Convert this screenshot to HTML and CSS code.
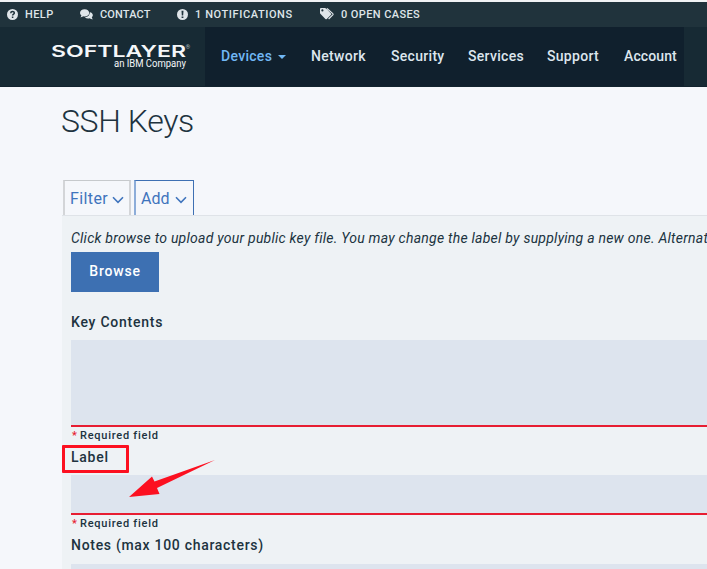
FILE: index.html
```html
<!DOCTYPE html>
<html lang="en">
<head>
<meta charset="utf-8">
<title>SSH Keys</title>
<link rel="stylesheet" href="styles.css">
</head>
<body>
<div class="utility">
  <a class="help"><svg width="11" height="11" viewBox="0 0 11 11"><circle cx="5.5" cy="5.5" r="5.5" fill="currentColor"/><path d="M3.7 4.2C3.8 2 7.4 2.1 7.3 4.1C7.2 5.1 5.7 5.2 5.6 6.5M5.6 7.6V9" fill="none" stroke="#20333c" stroke-width="1.5"/></svg><span>HELP</span></a>
  <a class="contact"><svg width="13" height="11" viewBox="0 0 13 11"><path d="M9.8 3.2C12.3 3.5 13.6 5.8 12.4 7.5L11.8 8.2Q12 9.5 13 10.3Q11 10.5 9.8 9.3Q6.7 10 4.9 8.2Q9.8 7.7 9.8 3.2Z" fill="currentColor"/><path d="M4.6.3C7.2.3 9.2 1.8 9.2 3.9S7.2 7.4 4.6 7.4Q3.9 7.4 3.2 7.2Q2 8.4.3 8.3Q1.3 7.4 1.4 6.4Q0 5.3 0 3.9C0 1.8 2 .3 4.6.3Z" fill="currentColor"/></svg><span>CONTACT</span></a>
  <a class="notifications"><svg width="11" height="11" viewBox="0 0 11 11"><circle cx="5.5" cy="5.5" r="5.5" fill="currentColor"/><path d="M4.5 1.8H6.5L6.2 6.4H4.8ZM4.6 7.4H6.4V9.1H4.6Z" fill="#20333c"/></svg><span>1 NOTIFICATIONS</span></a>
  <a class="cases"><svg width="15" height="12" viewBox="0 0 15 12"><path fill-rule="evenodd" d="M0 1Q0 0 1 0H4.8Q5.6 0 6.2.6L11 5.4Q11.7 6.1 11 6.8L6.8 11Q6.1 11.7 5.4 11L.6 6.1Q0 5.5 0 4.8ZM2.4 1.3A1.1 1.1 0 1 0 2.4 3.5A1.1 1.1 0 1 0 2.4 1.3Z" fill="currentColor"/><path d="M7 .5L12.8 5.6Q13.4 6.1 12.8 6.8L8.6 11" fill="none" stroke="currentColor" stroke-width="1.2"/></svg><span>0 OPEN CASES</span></a>
</div>
<header class="header">
  <svg class="logo" width="140" height="28" viewBox="0 0 140 28">
    <text class="brand" x="0" y="13.8" textLength="135" lengthAdjust="spacingAndGlyphs">SOFTLAYER</text>
    <text class="mark" x="134.5" y="6">®</text>
    <text class="tagline" x="63" y="24.3" textLength="72" lengthAdjust="spacingAndGlyphs">an IBM Company</text>
  </svg>
  <nav class="nav">
    <a class="devices">Devices</a><i class="caret"></i>
    <a class="network">Network</a>
    <a class="security">Security</a>
    <a class="services">Services</a>
    <a class="support">Support</a>
    <a class="account">Account</a>
  </nav>
</header>
<main>
  <h1>SSH Keys</h1>
  <div class="tabs">
    <a class="tab filter"><span>Filter</span><svg width="12" height="8" viewBox="0 0 12 8"><path d="M1 1.3L6 6.3L11 1.3"/></svg></a>
    <a class="tab add"><span>Add</span><svg width="12" height="8" viewBox="0 0 12 8"><path d="M1 1.3L6 6.3L11 1.3"/></svg></a>
  </div>
  <section class="panel">
    <p class="intro">Click browse to upload your public key file. You may change the label by supplying a new one. Alternat</p>
    <button class="browse">Browse</button>
    <label class="key-title">Key Contents</label>
    <div class="field key-field"></div>
    <div class="required"><b>*</b>Required field</div>
    <label class="label-title">Label</label>
    <div class="field label-field"></div>
    <div class="required"><b>*</b>Required field</div>
    <label class="notes-title">Notes (max 100 characters)</label>
    <div class="field notes-field"></div>
  </section>
</main>
<div class="highlight"></div>
<svg class="arrow" width="88" height="40" viewBox="0 0 88 40"><path d="M0 37L23 16.5L25.5 21.5L86 0L28 28L30.5 34Z" fill="#fc1020"/></svg>
</body>
</html>
```
FILE: styles.css
```css
* { box-sizing: border-box; }
body {
  margin: 0;
  height: 569px;
  overflow: hidden;
  position: relative;
  background: #f5f7fb;
  color: #20333f;
  font-family: Roboto, "Liberation Sans", sans-serif;
  border-top: 2px solid #f1f3f5;
}
.utility {
  height: 25px;
  display: flex;
  align-items: center;
  padding-left: 7px;
  background: #20333c;
  color: #dfe5e9;
  font-size: 11px;
  font-weight: 500;
  line-height: 24px;
  white-space: nowrap;
}
.utility svg { margin-bottom: 1px; }
.utility a { display: flex; align-items: center; gap: 7px; flex: none; }
.help { width: 73px; letter-spacing: .4px; }
.contact { width: 97px; letter-spacing: .15px; }
.notifications { width: 143px; letter-spacing: .6px; }
.utility .cases { letter-spacing: .4px; gap: 6px; }
.header { height: 60px; display: flex; background: #172a34; border-bottom: 1px solid #12232e; }
.logo { flex: none; margin: 16px 14px 0 51px; overflow: visible; fill: #f5f7f9; }
.brand { font: 600 16px Inter, sans-serif; }
.mark { font: 6px Roboto, sans-serif; fill: #a9b4ba; }
.tagline { font: 10px Roboto, sans-serif; }
.nav {
  width: 479px;
  display: flex;
  align-items: center;
  padding: 0 0 1px 16px;
  background: #10202d;
  color: #dde6ee;
  font-size: 14px;
  font-weight: 500;
  letter-spacing: .3px;
}
.nav a { flex: none; }
.devices { width: 57px; color: #70b7f4; }
.caret { border: 4px solid transparent; border-top-color: #70b7f4; border-bottom: 0; margin: 2px 25px 0 0; }
.network { width: 80px; }
.security { width: 77px; }
.services { width: 79px; }
.support { width: 77px; }
.nav .account { letter-spacing: .1px; }
main { padding-left: 62px; }
h1 { height: 93px; margin: 0 0 0 -1px; padding-top: 14px; font-size: 32px; font-weight: 300; line-height: 40px; letter-spacing: -.4px; }
.tabs { height: 35px; display: flex; gap: 3px; padding-left: 1px; }
.tab {
  height: 35px;
  display: flex;
  align-items: center;
  justify-content: space-between;
  padding: 0 6px 0 5px;
  border: 1px solid #c6c9cc;
  border-bottom: 0;
  color: #3f74bd;
  font-size: 16px;
}
.tab svg { margin-top: 4px; fill: none; stroke: currentColor; stroke-width: 1.6; }
.filter { width: 68px; border-left: 2px solid #d3d5d8; border-right: 2px solid #d3d5d8; padding: 0 5px; letter-spacing: .4px; }
.add { width: 60px; border-color: #3e70b3; border-left: 2px solid #8dadd9; }
.panel {
  height: 360px;
  padding: 12px 0 0 9px;
  border-top: 1px solid #dfe3e8;
  background: #eef2f5;
  overflow: hidden;
}
.intro { height: 24px; margin: 0; font-size: 14px; font-style: italic; line-height: 20px; letter-spacing: .24px; white-space: nowrap; }
.browse { display: block; width: 88px; height: 40px; padding: 0 0 2px; border: 0; background: #3d70b2; color: #fff; font: 500 14px Roboto, sans-serif; letter-spacing: .8px; }
.panel label { display: block; font-size: 14px; font-weight: 500; line-height: 18px; letter-spacing: .75px; }
.panel .key-title { padding-top: 21px; height: 48px; }
.field { background: #dde4ee; border-bottom: 2px solid #e71d32; }
.key-field { height: 87px; }
.required { height: 21px; padding: 0 0 0 1px; font-size: 11px; font-weight: 500; line-height: 18px; letter-spacing: .75px; }
.required b { display: inline-block; width: 8px; color: #e71d32; font-weight: 500; letter-spacing: 0; }
.panel .label-title { height: 27px; }
.label-field { height: 40px; }
.panel .notes-title { height: 28px; letter-spacing: .7px; }
.notes-field { height: 50px; }
.highlight { position: absolute; left: 62px; top: 443px; width: 67px; height: 28px; border: 3px solid #fc1020; border-radius: 1px; }
.arrow { position: absolute; left: 129px; top: 458px; }
```
